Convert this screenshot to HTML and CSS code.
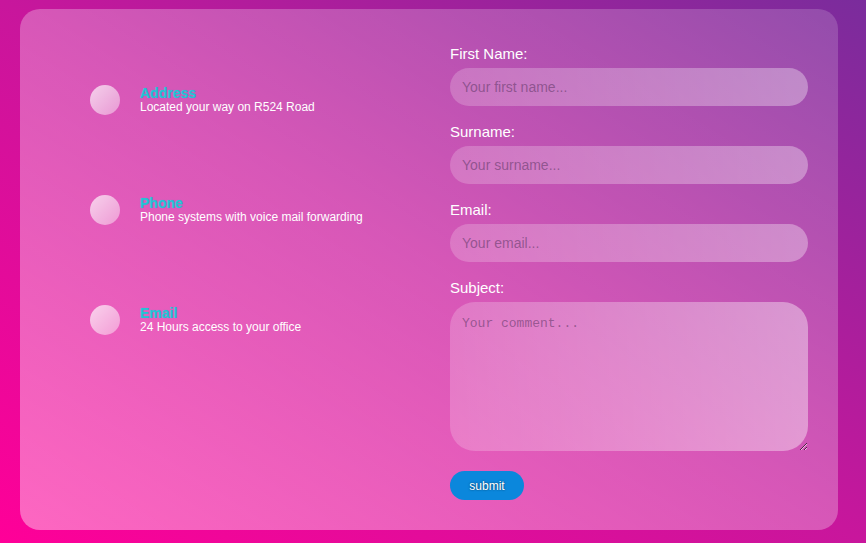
FILE: index.html
```html
<!DOCTYPE html>
<html>
<head>
<meta charset="utf-8">
<link rel="stylesheet" href="styles.css">
</head>
<body>
<div class="card">
  <div class="info">
    <div class="item">
      <div class="dot"></div>
      <div class="txt"><div class="title">Address</div><div class="desc">Located your way on R524 Road</div></div>
    </div>
    <div class="item">
      <div class="dot"></div>
      <div class="txt"><div class="title">Phone</div><div class="desc">Phone systems with voice mail forwarding</div></div>
    </div>
    <div class="item">
      <div class="dot"></div>
      <div class="txt"><div class="title">Email</div><div class="desc">24 Hours access to your office</div></div>
    </div>
  </div>
  <form class="form">
    <label class="lbl">First Name:</label>
    <input class="field" type="text" placeholder="Your first name...">
    <label class="lbl">Surname:</label>
    <input class="field" type="text" placeholder="Your surname...">
    <label class="lbl">Email:</label>
    <input class="field" type="text" placeholder="Your email...">
    <label class="lbl">Subject:</label>
    <textarea class="area" placeholder="Your comment..."></textarea>
    <button class="btn" type="button">submit</button>
  </form>
</div>
</body>
</html>
```

FILE: styles.css
```css
html, body {
  margin: 0;
  height: 100%;
  overflow: hidden;
}
body {
  background: linear-gradient(to top right, #ff0098 0%, #c8169c 50%, #7a2c9c 100%);
  font-family: "Liberation Sans", Arial, sans-serif;
  padding: 9px 28px 0 20px;
  box-sizing: border-box;
}
.card {
  width: 818px;
  height: 521px;
  box-sizing: border-box;
  border-radius: 20px;
  background: linear-gradient(to top right, rgba(255,255,255,0.4), rgba(255,255,255,0.16));
  display: flex;
  padding: 37px 30px 0 70px;
}
.info {
  width: 360px;
  padding-top: 39px;
  display: flex;
  flex-direction: column;
  gap: 80px;
}
.item {
  display: flex;
  align-items: center;
  gap: 20px;
}
.dot {
  width: 30px;
  height: 30px;
  border-radius: 50%;
  background: linear-gradient(135deg, rgba(255,255,255,0.72), rgba(255,255,255,0.38));
  flex: none;
}
.title {
  font-size: 14px;
  line-height: 14px;
  font-weight: bold;
  color: #22c4d4;
  text-shadow: 0 0 1px rgba(20,200,220,0.6);
}
.desc {
  font-size: 12px;
  line-height: 14px;
  color: #fff;
}
.form {
  width: 358px;
  display: flex;
  flex-direction: column;
  margin: 0;
}
.lbl {
  color: #fff;
  font-size: 15px;
  line-height: 15px;
  margin-bottom: 7px;
}
.field {
  height: 38px;
  border: none;
  outline: none;
  border-radius: 19px;
  background: linear-gradient(to right, rgba(255,255,255,0.2), rgba(255,255,255,0.34));
  padding: 0 12px;
  font-family: "Liberation Sans", Arial, sans-serif;
  font-size: 14px;
  margin-bottom: 18px;
  box-sizing: border-box;
}
.field::placeholder {
  color: rgba(105,60,110,0.62);
}
.area {
  height: 149px;
  border: none;
  outline: none;
  border-radius: 25px;
  background: linear-gradient(to right, rgba(255,255,255,0.2), rgba(255,255,255,0.4));
  padding: 14px 12px;
  font-family: "Liberation Mono", monospace;
  font-size: 13px;
  box-sizing: border-box;
  margin-bottom: 20px;
}
.area::placeholder {
  color: rgba(105,60,110,0.62);
}
.btn {
  width: 74px;
  height: 29px;
  border: none;
  border-radius: 15px;
  background: #0b87dc;
  color: #fff;
  font-family: "Liberation Sans", Arial, sans-serif;
  font-size: 12px;
  text-shadow: 0 0 2px rgba(0,0,0,0.6);
  padding: 0;
}
```
